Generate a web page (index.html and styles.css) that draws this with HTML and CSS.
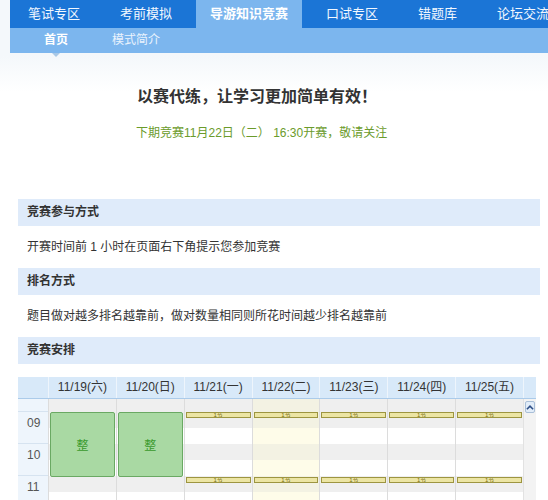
FILE: index.html
```html
<!DOCTYPE html>
<html lang="zh-CN">
<head>
<meta charset="utf-8">
<title>导游知识竞赛</title>
<link rel="stylesheet" href="styles.css">
</head>
<body>
<div class="top">
  <ul class="nav">
    <li class="first">笔试专区</li>
    <li>考前模拟</li>
    <li class="active">导游知识竞赛</li>
    <li>口试专区</li>
    <li>错题库</li>
    <li>论坛交流</li>
  </ul>
  <div class="subnav">
    <span class="sub current">首页</span>
    <span class="sub">模式简介</span>
  </div>
</div>

<div class="hero">
  <h1 class="slogan">以赛代练，让学习更加简单有效！</h1>
  <p class="next">下期竞赛11月22日（二） 16:30开赛，敬请关注</p>
</div>

<div class="sec">
  <div class="sec-h">竞赛参与方式</div>
  <div class="sec-p">开赛时间前 1 小时在页面右下角提示您参加竞赛</div>
  <div class="sec-h">排名方式</div>
  <div class="sec-p">题目做对越多排名越靠前，做对数量相同则所花时间越少排名越靠前</div>
  <div class="sec-h">竞赛安排</div>
</div>

<div class="cal">
  <div class="cal-head">
    <div class="hc"></div>
    <div class="hc">11/19(六)</div>
    <div class="hc">11/20(日)</div>
    <div class="hc">11/21(一)</div>
    <div class="hc">11/22(二)</div>
    <div class="hc">11/23(三)</div>
    <div class="hc">11/24(四)</div>
    <div class="hc">11/25(五)</div>
    <div class="hc"></div>
  </div>
  <div class="cal-body">
    <div class="tcol">
      <div class="tsp"></div>
      <div class="hour">09</div>
      <div class="hour">10</div>
      <div class="hour">11</div>
    </div>
    <div class="dcol">
      <div class="sp"></div>
      <div class="ev-g">整</div>
    </div>
    <div class="dcol">
      <div class="sp"></div>
      <div class="ev-g">整</div>
    </div>
    <div class="dcol">
      <div class="sp"></div>
      <div class="ev-y">1节</div>
      <div class="gap"></div>
      <div class="ev-y">1节</div>
    </div>
    <div class="dcol today">
      <div class="sp"></div>
      <div class="ev-y">1节</div>
      <div class="gap"></div>
      <div class="ev-y">1节</div>
    </div>
    <div class="dcol">
      <div class="sp"></div>
      <div class="ev-y">1节</div>
      <div class="gap"></div>
      <div class="ev-y">1节</div>
    </div>
    <div class="dcol">
      <div class="sp"></div>
      <div class="ev-y">1节</div>
      <div class="gap"></div>
      <div class="ev-y">1节</div>
    </div>
    <div class="dcol">
      <div class="sp"></div>
      <div class="ev-y">1节</div>
      <div class="gap"></div>
      <div class="ev-y">1节</div>
    </div>
    <div class="scroll">
      <div class="up">
        <svg width="9" height="7" viewBox="0 0 9 7"><path d="M1 5.5 L4.5 2 L8 5.5" fill="none" stroke="#2f4f86" stroke-width="1.8"/></svg>
      </div>
    </div>
  </div>
</div>
</body>
</html>
```

FILE: styles.css
```css
* { box-sizing: border-box; }
html, body { margin: 0; padding: 0; }
body {
  width: 548px;
  height: 500px;
  overflow: hidden;
  font-family: "Liberation Sans", "Noto Sans CJK SC", sans-serif;
  color: #333;
  background: linear-gradient(to bottom, #f4f8fb 0, #f4f8fb 56px, #ffffff 92px);
}

.nav {
  list-style: none;
  margin: 0 0 0 10px;
  padding: 0;
  height: 28px;
  display: flex;
  background: #1b75d6;
  white-space: nowrap;
  overflow: hidden;
}
.nav li {
  padding: 0 20px;
  font-size: 13px;
  line-height: 28px;
  color: #f2f8ff;
  flex: none;
}
.nav li.first { padding-left: 18px; }
.nav li.active {
  background: #7cb6ee;
  padding: 0 14px;
  margin: 0 4px;
  font-weight: bold;
  color: #fff;
}

.subnav {
  position: relative;
  margin-left: 10px;
  height: 25px;
  background: #7cb6ee;
  display: flex;
  padding-left: 34px;
  gap: 44px;
}
.sub {
  position: relative;
  font-size: 12px;
  line-height: 25px;
  color: #eaf3fd;
}
.sub.current { color: #fff; font-weight: bold; }
.sub.current::after {
  content: "";
  position: absolute;
  left: 8px;
  bottom: -4px;
  border-left: 4px solid transparent;
  border-right: 4px solid transparent;
  border-top: 4px solid #a8c8e6;
}

.hero { padding-left: 137px; padding-top: 33px; }
.slogan {
  margin: 0;
  font-size: 16px;
  line-height: 22px;
  font-weight: bold;
  color: #333;
}
.next {
  margin: 16px 0 0 -1px;
  font-size: 12px;
  line-height: 18px;
  color: #6b9b2b;
}

.sec { margin: 57px 8px 0 18px; }
.sec-h {
  height: 27px;
  line-height: 27px;
  background: #dfebfa;
  padding-left: 9px;
  font-size: 12px;
  font-weight: bold;
  color: #333;
}
.sec-p {
  height: 42px;
  line-height: 42px;
  padding-left: 9px;
  font-size: 12px;
  color: #333;
}

.cal { margin: 13px 12px 0 18px; }
.cal-head {
  display: grid;
  grid-template-columns: 30px repeat(7, 1fr) 13px;
  height: 22px;
  background: #d8e9f9;
  border-bottom: 1px solid #abcbea;
}
.hc {
  font-size: 12px;
  line-height: 21px;
  text-align: center;
  color: #333;
  border-left: 1px solid #eef5fc;
  white-space: nowrap;
}
.hc:first-child { border-left: none; }

.cal-body {
  display: grid;
  grid-template-columns: 30px repeat(7, 1fr) 13px;
  height: 110px;
  overflow: hidden;
}
.tcol { background: #eef5fc; }
.tsp { height: 13px; border-bottom: 1px solid #d6e3f0; }
.hour {
  height: 32px;
  padding-left: 9px;
  font-size: 12px;
  line-height: 22px;
  color: #555;
  border-bottom: 1px solid #d6e3f0;
}

.dcol {
  border-left: 1px solid #dcdcdc;
  background: repeating-linear-gradient(to bottom, #efefef 0, #efefef 16px, #ffffff 16px, #ffffff 32px);
  background-position: 0 13px;
}
.dcol.today {
  background: repeating-linear-gradient(to bottom, #f3f2e3 0, #f3f2e3 16px, #fefce9 16px, #fefce9 32px);
  background-position: 0 13px;
}
.sp { height: 13px; }
.gap { height: 59px; }

.ev-g {
  margin: 0 1px;
  height: 65px;
  background: #a9d9a3;
  border: 1px solid #6aa963;
  border-radius: 2px;
  display: flex;
  align-items: center;
  justify-content: center;
  font-size: 12px;
  color: #3a9a2c;
}
.ev-y {
  margin: 0 1px;
  height: 6px;
  background: #ece5a4;
  border: 1px solid #9d9540;
  font-size: 6px;
  line-height: 4px;
  text-align: center;
  color: #7a6e12;
  overflow: hidden;
}

.scroll {
  background: #f3f3f3;
  border-left: 1px solid #e2e2e2;
  padding: 2px 1px 0 1px;
}
.up {
  height: 12px;
  background: #e2edf9;
  border: 1px solid #a9bfd8;
  border-radius: 2px;
  display: flex;
  align-items: center;
  justify-content: center;
}
.up svg { display: block; }
```
